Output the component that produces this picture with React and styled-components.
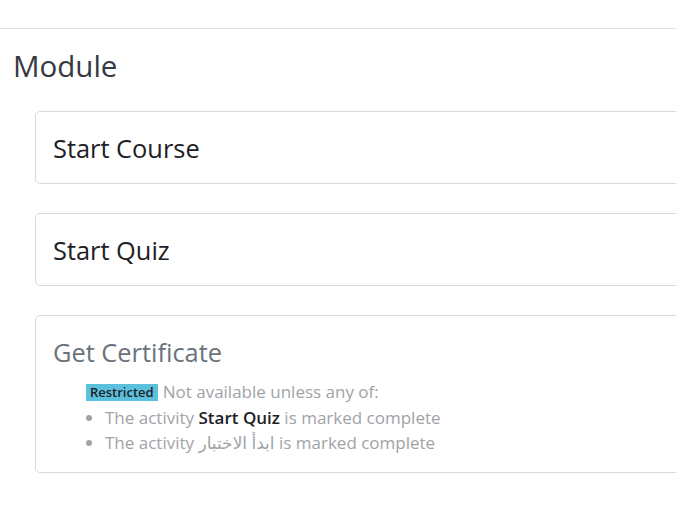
import React from 'react';
import styled, { createGlobalStyle } from 'styled-components';

const GlobalStyle = createGlobalStyle`
  body {
    margin: 0;
    background: #fff;
    font-family: "Open Sans", "Noto Sans", "DejaVu Sans", sans-serif;
    color: #1d2125;
    overflow: hidden;
  }
`;

const Page = styled.div`
  width: 100%;
  overflow: hidden;
`;

const TopBar = styled.div`
  height: 28px;
  border-bottom: 1px solid #dee2e6;
`;

const SectionTitle = styled.h3`
  margin: 20px 0 0 13px;
  font-size: 29.5px;
  font-weight: 400;
  line-height: 34px;
  color: #343a40;
`;

const ActivityList = styled.div`
  display: flex;
  flex-direction: column;
  gap: 29px;
  margin: 28px -40px 0 35px;
`;

const Card = styled.div`
  border: 1px solid #d9d9d9;
  border-radius: 5px;
  padding: 18px 17px 17px 17px;
`;

const CardTitle = styled.div`
  font-size: 25.4px;
  line-height: 36px;
  color: ${(p) => (p.$dimmed ? '#6a737b' : '#1d2125')};
`;

const Restrictions = styled.div`
  margin: 9px 0 -1px 33px;
  font-size: 17px;
  line-height: 25.5px;
  color: #9fa3a7;
`;

const Badge = styled.span`
  display: inline-block;
  background: #5bc0de;
  color: #1d2125;
  font-size: 13px;
  font-weight: 600;
  line-height: 17px;
  padding: 0 4px;
  margin-right: 5px;
  vertical-align: 1px;
`;

const Conditions = styled.ul`
  margin: 0;
  padding-left: 19px;
  li::marker {
    color: #9fa3a7;
  }
`;

const Strong = styled.strong`
  font-weight: 600;
  color: #1d2125;
`;

export default function App() {
  return (
    <Page>
      <GlobalStyle />
      <TopBar />
      <SectionTitle>Module</SectionTitle>
      <ActivityList>
        <Card>
          <CardTitle>Start Course</CardTitle>
        </Card>
        <Card>
          <CardTitle>Start Quiz</CardTitle>
        </Card>
        <Card>
          <CardTitle $dimmed>Get Certificate</CardTitle>
          <Restrictions>
            <div>
              <Badge>Restricted</Badge>Not available unless any of:
            </div>
            <Conditions>
              <li>
                The activity <Strong>Start Quiz</Strong> is marked complete
              </li>
              <li>
                The activity <span dir="rtl">ابدأ الاختبار</span> is marked complete
              </li>
            </Conditions>
          </Restrictions>
        </Card>
      </ActivityList>
    </Page>
  );
}
